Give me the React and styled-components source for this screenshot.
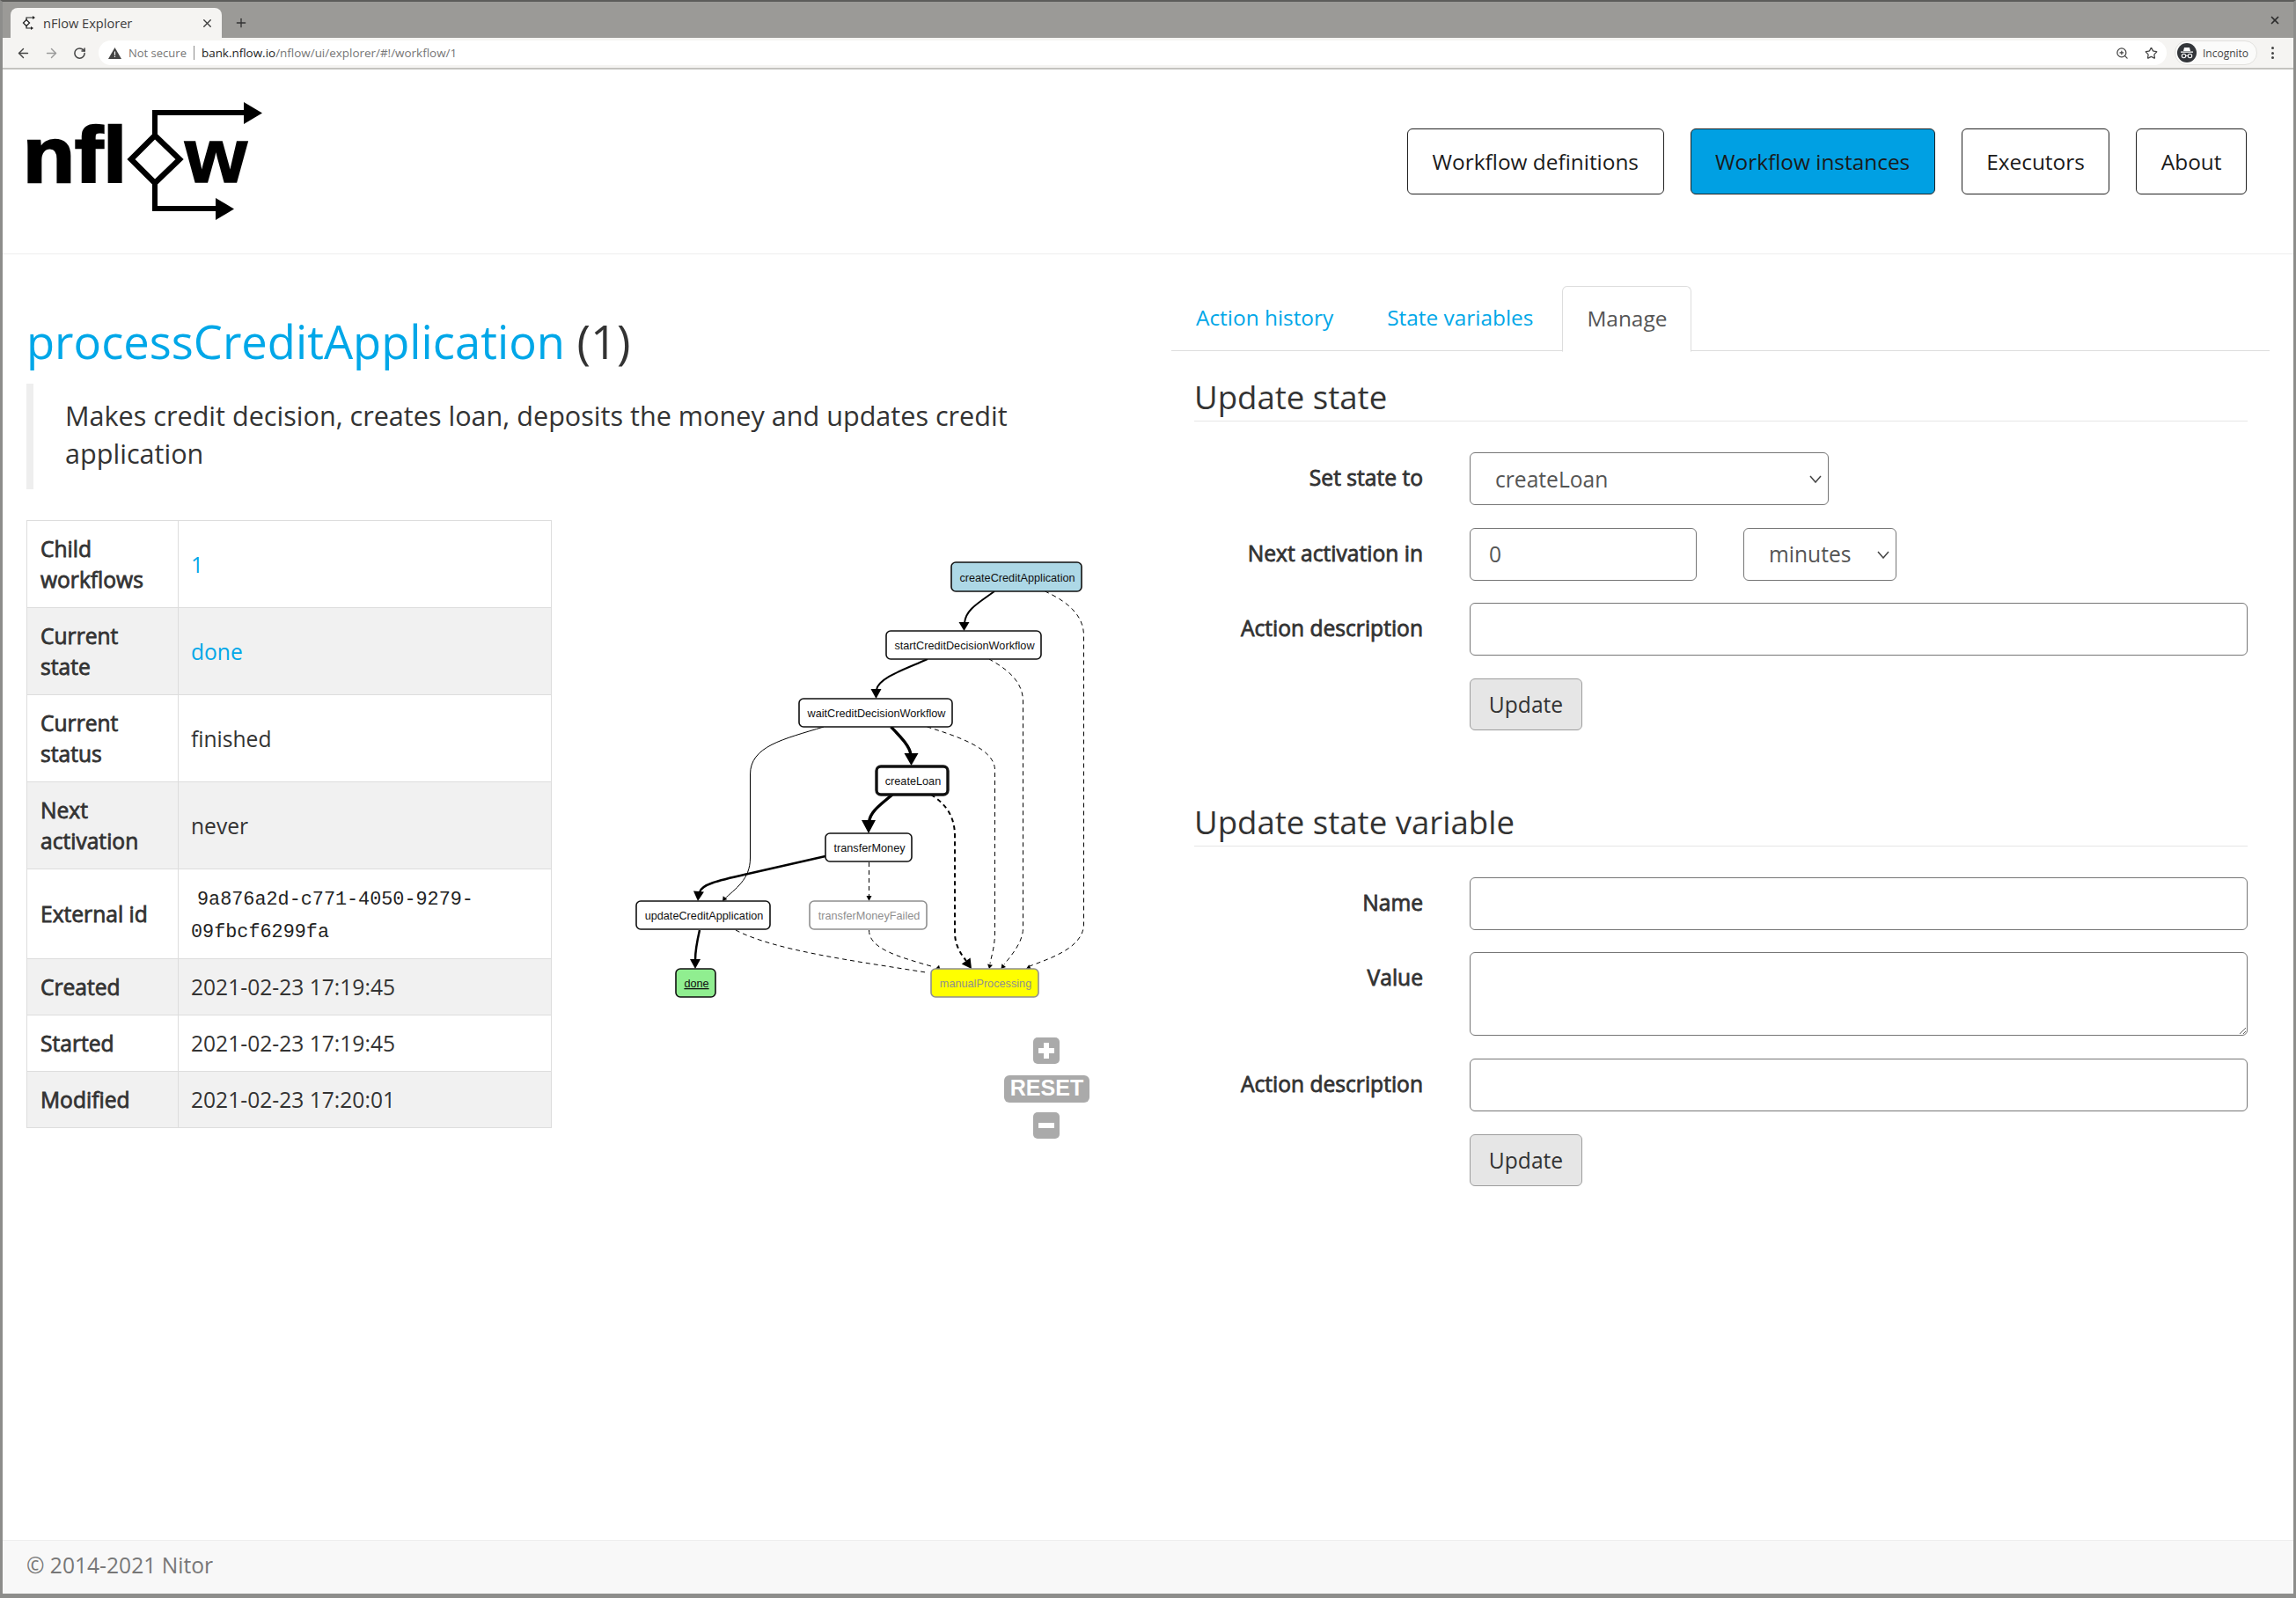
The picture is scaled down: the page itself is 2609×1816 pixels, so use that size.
import React from 'react'
import styled, { createGlobalStyle } from 'styled-components'
import { ArrowLeft, ArrowRight, RotateCw, ZoomIn, Star, X, Plus } from 'lucide-react'

const GlobalStyle = createGlobalStyle`
  html, body {
    margin: 0;
    padding: 0;
    background: #fff;
  }
  body {
    font-family: 'Open Sans', 'Noto Sans', sans-serif;
    color: #333;
  }
  * {
    box-sizing: border-box;
  }
`

const Frame = styled.div`
  width: 2609px;
  height: 1816px;
  overflow: hidden;
  display: flex;
  flex-direction: column;
  border-top: 2px solid #5c5c5a;
  border-left: 3px solid #8d8d8b;
  border-right: 3px solid #8d8d8b;
  border-bottom: 5px solid #8d8d8b;
`

const TabStrip = styled.div`
  height: 41px;
  flex: none;
  background: #9b9a97;
  display: flex;
  align-items: flex-end;
  padding-left: 9px;
  color: #333;
`

const BrowserTab = styled.div`
  width: 240px;
  height: 34px;
  background: #f5f4f2;
  border-radius: 8px 8px 0 0;
  display: flex;
  align-items: center;
  padding: 0 9px 0 12px;
  font-size: 14.6px;
  color: #3c3c3c;
`

const TabTitle = styled.span`
  flex: 1;
  margin-left: 9px;
`

const NewTab = styled.div`
  width: 16px;
  height: 34px;
  margin-left: 14px;
  display: flex;
  align-items: center;
  color: #333;
`

const WindowClose = styled.div`
  margin-left: auto;
  margin-right: 14px;
  align-self: center;
  display: flex;
  color: #2c2c2c;
`

const Toolbar = styled.div`
  height: 36px;
  flex: none;
  background: #f5f4f2;
  border-bottom: 2px solid #c4c3bf;
  display: flex;
  align-items: center;
  padding-left: 15px;
  color: #555;
`

const NavIcon = styled.span`
  width: ${(p) => p.$width}px;
  display: flex;
  color: ${(p) => (p.$muted ? '#9a9a9a' : '#444')};
`

const UrlBar = styled.div`
  width: 2350px;
  height: 28px;
  margin-left: 14px;
  background: #fff;
  border-radius: 14px;
  display: flex;
  align-items: center;
  padding: 0 10px 0 11px;
  font-size: 13.45px;
  color: #767676;
`

const NotSecure = styled.span`
  margin-left: 8px;
  font-size: 13px;
`

const UrlHost = styled.span`
  color: #222;
`

const Divider = styled.span`
  width: 1px;
  height: 16px;
  background: #8a8a8a;
  margin: 0 8px;
`

const UrlEnd = styled.div`
  margin-left: auto;
  display: flex;
  align-items: center;
  gap: 18px;
  color: #444;
`

const IncognitoPill = styled.div`
  width: 94px;
  height: 28px;
  margin-left: 9px;
  border: 1px solid #e2e1de;
  border-radius: 14px;
  background: #fbfbfa;
  display: flex;
  align-items: center;
  gap: 7px;
  padding-left: 2px;
  font-size: 12px;
  color: #444;
`

const Kebab = styled.div`
  margin-left: 16px;
  display: flex;
  flex-direction: column;
  gap: 2.5px;

  span {
    width: 3px;
    height: 3px;
    border-radius: 50%;
    background: #444;
  }
`

const Header = styled.header`
  height: 210px;
  flex: none;
  border-bottom: 1px solid #eee;
  display: flex;
  align-items: flex-start;
  justify-content: space-between;
  padding: 37px 53px 0 23px;
`

const Nav = styled.nav`
  display: flex;
  gap: 30px;
  margin-top: 30px;
`

const NavButton = styled.a`
  height: 75px;
  padding: 0 27.5px;
  display: flex;
  align-items: center;
  font-size: 24.4px;
  color: #1a1a1a;
  background: ${(p) => (p.$active ? '#00a0e3' : '#fff')};
  border: 1.5px solid #222;
  border-radius: 6px;
`

const Main = styled.main`
  flex: 1;
  display: flex;
`

const LeftColumn = styled.section`
  width: 1328px;
  flex: none;
  padding: 64px 0 0 27px;
`

const Title = styled.h1`
  margin: 0;
  font-size: 52.5px;
  line-height: 70px;
  font-weight: 400;
  color: #333;

  a {
    color: #00a7e8;
  }
`

const Quote = styled.blockquote`
  width: 1270px;
  height: 120px;
  margin: 13px 0 0;
  padding: 0 50px 4px 36px;
  border-left: 8px solid #eee;
  font-size: 30.6px;
  line-height: 43px;
  display: flex;
  align-items: center;
`

const Details = styled.div`
  display: flex;
  align-items: flex-start;
  margin-top: 35px;
`

const InfoTable = styled.table`
  width: 597px;
  flex: none;
  border-collapse: collapse;
  font-size: 24.6px;
  line-height: 35px;
  color: #333;

  tr:nth-child(even) {
    background: #f1f1f1;
  }

  th,
  td {
    border: 1.5px solid #ddd;
    padding: 14px 15px;
    text-align: left;
    vertical-align: middle;
  }

  td {
    padding-left: 14px;
  }

  th {
    width: 172px;
    font-weight: 400;
    -webkit-text-stroke: 0.8px #333;
  }

  a {
    color: #00a7e8;
  }
`

const Mono = styled.code`
  display: block;
  margin-bottom: -3px;
  padding-top: 2px;
  font-family: 'Liberation Mono', monospace;
  font-size: 21.8px;
  line-height: 37px;
  color: #222;
  text-indent: 7px;
`

const GraphSvg = styled.svg`
  flex: none;
  margin-left: 73px;
  font-family: 'Liberation Sans', Arial, sans-serif;
`

const RightColumn = styled.section`
  width: 1248px;
  flex: none;
  padding-top: 36px;
`

const Tabs = styled.div`
  height: 74px;
  display: flex;
  gap: 5px;
  align-items: stretch;
  border-bottom: 1.5px solid #ddd;
`

const TabLink = styled.a`
  padding: 0 27px 2px;
  margin-bottom: ${(p) => (p.$active ? '-1.5px' : '0')};
  display: flex;
  align-items: center;
  font-size: 24.4px;
  color: ${(p) => (p.$active ? '#555' : '#00a7e8')};
  background: ${(p) => (p.$active ? '#fff' : 'transparent')};
  border: 1.5px solid ${(p) => (p.$active ? '#ddd' : 'transparent')};
  border-bottom-color: ${(p) => (p.$active ? '#fff' : 'transparent')};
  border-radius: 6px 6px 0 0;
`

const Panel = styled.div`
  padding: 0 25px 0 26px;
`

const Section = styled.div`
  margin-top: ${(p) => p.$top}px;
`

const SectionTitle = styled.h3`
  margin: 0 0 35px;
  height: 60px;
  font-size: 36.6px;
  line-height: 64px;
  font-weight: 400;
  color: #333;
  border-bottom: 1.5px solid #e6e6e6;
`

const FormRow = styled.div`
  display: grid;
  grid-template-columns: 260px 1fr;
  column-gap: 53px;
  margin-bottom: 25.6px;
  align-items: start;
`

const FormLabel = styled.label`
  text-align: right;
  padding-top: 11px;
  font-size: 24.6px;
  line-height: 36px;
  font-weight: 400;
  -webkit-text-stroke: 0.8px #333;
  color: #333;
`

const Controls = styled.div`
  display: flex;
  gap: 53px;
`

const Input = styled.input`
  width: ${(p) => p.$width || '100%'};
  height: 60px;
  padding: 0 21px;
  font: 400 24.6px 'Open Sans', sans-serif;
  color: #555;
  background: #fff;
  border: 1.5px solid #767676;
  border-radius: 6px;
  outline: none;
`

const TextArea = styled.textarea`
  display: block;
  width: 100%;
  height: 95px;
  padding: 10px 21px;
  font: 400 24.6px 'Open Sans', sans-serif;
  color: #555;
  background: #fff;
  border: 1.5px solid #767676;
  border-radius: 6px;
  outline: none;
`

const SelectWrap = styled.div`
  position: relative;
  width: ${(p) => p.$width}px;
  height: 60px;

  svg {
    position: absolute;
    right: 8px;
    top: 26px;
    pointer-events: none;
  }
`

const Select = styled.select`
  appearance: none;
  width: 100%;
  height: 60px;
  padding: 0 0 0 28px;
  font: 400 24.6px 'Open Sans', sans-serif;
  color: #555;
  background: #fff;
  border: 1.5px solid #767676;
  border-radius: 6px;
  outline: none;
`

const UpdateButton = styled.button`
  grid-column: 2;
  justify-self: start;
  width: 128px;
  height: 59px;
  font: 400 24.6px 'Open Sans', sans-serif;
  color: #333;
  background: #e6e6e6;
  border: 1.5px solid #9d9d9d;
  border-radius: 6px;
`

const Footer = styled.footer`
  height: 61px;
  flex: none;
  background: #f8f8f8;
  border-top: 1.5px solid #eee;
  display: flex;
  align-items: center;
  padding: 0 0 5px 27px;
  font-size: 24.6px;
  color: #777;
`

const nodes = [
  { label: 'createCreditApplication', x: 1081, y: 639, w: 148, h: 33, fill: '#add8e6' },
  { label: 'startCreditDecisionWorkflow', x: 1007, y: 717, w: 176, h: 32 },
  { label: 'waitCreditDecisionWorkflow', x: 908, y: 794, w: 174, h: 32 },
  { label: 'createLoan', x: 996, y: 871, w: 81, h: 32, bold: true },
  { label: 'transferMoney', x: 938, y: 947, w: 98, h: 32 },
  { label: 'updateCreditApplication', x: 723, y: 1024, w: 152, h: 32 },
  { label: 'transferMoneyFailed', x: 920, y: 1024, w: 133, h: 32, gray: true },
  { label: 'done', x: 768, y: 1101, w: 45, h: 32, fill: '#90ee90', underline: true },
  { label: 'manualProcessing', x: 1058, y: 1101, w: 122, h: 32, fill: '#ffff00', gray: true },
]

const edges = [
  { d: 'M1130 672C1112 685 1097 693 1096 708', w: 2, tip: [1095.5, 717, 0, 10, 6] },
  { d: 'M1054 749C1030 760 998 770 996 784', w: 2, tip: [995.5, 794, 0, 11, 6] },
  { d: 'M1012.5 826C1024 838 1034 848 1035 858', w: 3.4, tip: [1035.5, 870, 0, 14, 8] },
  { d: 'M1014 903C1000 915 989 922 987.5 934', w: 3.4, tip: [987, 947, 0, 15, 8] },
  { d: 'M938 973L850 993C815 1001 797 1005 795 1014', w: 2.5, tip: [793, 1024, 5, 11, 6] },
  { d: 'M936 826C890 840 852.5 848 852.5 880L852.5 975C852.5 1000 835 1010 823 1022', w: 1, tip: [821, 1024, 38, 5, 3] },
  { d: 'M987.5 980L987.5 1018', w: 1, dash: '5 4', tip: [987.5, 1024, 0, 6, 3] },
  { d: 'M795 1057C792 1070 790 1080 790 1091', w: 2.5, tip: [790, 1101, 0, 11, 6] },
  { d: 'M1187.5 672C1205 680 1231.5 695 1231.5 722L1231.5 1050C1231.5 1078 1190 1090 1170 1098', w: 1, dash: '5 4', tip: [1166, 1101, 65, 5, 3] },
  { d: 'M1124 749C1140 758 1162.5 772 1162.5 797L1162.5 1055C1162.5 1070 1150 1085 1141 1096', w: 1, dash: '5 4', tip: [1137.5, 1101, 40, 5, 3] },
  { d: 'M1053.5 826C1085 836 1130.5 850 1130.5 875L1130.5 1060C1130.5 1075 1127 1085 1125 1095', w: 1, dash: '5 4', tip: [1124, 1101, 12, 5, 3] },
  { d: 'M1058 903C1072 912 1085 925 1085 950L1085 1060C1085 1072 1090 1082 1098 1092', w: 2, dash: '5 4', tip: [1104, 1101, 325, 11, 6] },
  { d: 'M987.5 1057C987.5 1078 1020 1087 1058 1098', w: 1, dash: '5 4', tip: [1063, 1101, 75, 5, 3] },
  { d: 'M836 1057C880 1080 970 1092 1052 1105', w: 1, dash: '5 4', tip: [1058, 1107, 80, 5, 3] },
]

const Logo = () => (
  <svg width="276" height="136" viewBox="26 117 276 136" role="img" aria-label="nflow">
    <text x="26" y="208" textLength="118" lengthAdjust="spacingAndGlyphs" fontFamily="Liberation Sans, Arial, sans-serif" fontWeight="700" fontSize="89" stroke="#000" strokeWidth="2.5">nfl</text>
    <text x="210" y="208" textLength="71" lengthAdjust="spacingAndGlyphs" fontFamily="Liberation Sans, Arial, sans-serif" fontWeight="700" fontSize="88" stroke="#000" strokeWidth="1.5">w</text>
    <path d="M176 155V129H280M176 210V238H248" fill="none" stroke="#000" strokeWidth="6" />
    <path d="M176 155L204 182 176 209 149 182Z" fill="#fff" stroke="#000" strokeWidth="6.5" />
    <path d="M277 117L298 129.5 277 142ZM245 226L266 238.5 245 251Z" fill="#000" />
  </svg>
)

const Favicon = () => (
  <svg width="16" height="16" viewBox="0 0 16 16">
    <path d="M6 5V2H14M6 11V14H12" fill="none" stroke="#222" strokeWidth="1.2" />
    <path d="M6 4.5L9.5 8 6 11.5 2.5 8Z" fill="#fff" stroke="#222" strokeWidth="1.3" />
    <path d="M13 0L16 2 13 4ZM11 12L14 14 11 16Z" fill="#222" />
  </svg>
)

const WarningIcon = () => (
  <svg width="15" height="13" viewBox="0 0 15 13">
    <path d="M7.5 0L15 13H0Z" fill="#444" />
    <path d="M6.9 4.5H8.1V8.8H6.9ZM6.9 9.8H8.1V11H6.9Z" fill="#fff" />
  </svg>
)

const IncognitoIcon = () => (
  <svg width="22" height="22" viewBox="0 0 22 22">
    <circle cx="11" cy="11" r="11" fill="#33363a" />
    <path d="M7 9L8 5H14L15 9ZM4 9.6H18V10.8H4Z" fill="#fff" />
    <circle cx="7.5" cy="14.5" r="2.2" fill="none" stroke="#fff" strokeWidth="1.1" />
    <circle cx="14.5" cy="14.5" r="2.2" fill="none" stroke="#fff" strokeWidth="1.1" />
    <path d="M9.7 14.3H12.3" stroke="#fff" strokeWidth="1" />
  </svg>
)

const Chevron = () => (
  <svg width="14" height="9" viewBox="0 0 14 9">
    <path d="M1 1L7 8L13 1" fill="none" stroke="#444" strokeWidth="1.5" />
  </svg>
)

const Arrow = ({ tip, color }) => {
  const [x, y, angle, len, half] = tip
  return (
    <path
      d={`M${x} ${y}L${x - half} ${y - len}L${x + half} ${y - len}Z`}
      transform={`rotate(${angle} ${x} ${y})`}
      fill={color}
    />
  )
}

const Graph = () => (
  <GraphSvg width="560" height="720" viewBox="700 591 560 720">
    {edges.map((edge) => (
      <g key={edge.d}>
        <path
          d={edge.d}
          fill="none"
          stroke="#000"
          strokeWidth={edge.w}
          strokeDasharray={edge.dash}
        />
        <Arrow tip={edge.tip} color="#000" />
      </g>
    ))}
    {nodes.map((node) => (
      <g key={node.label}>
        <rect
          x={node.x}
          y={node.y}
          width={node.w}
          height={node.h}
          rx="5"
          fill={node.fill || '#fff'}
          stroke={node.gray ? '#8f8f8f' : '#111'}
          strokeWidth={node.bold ? 3.4 : 1.6}
        />
        <text
          x={node.x + node.w / 2 + 1}
          y={node.y + node.h / 2 + 5}
          textAnchor="middle"
          fontSize="12.7"
          fill={node.gray ? '#8f8f8f' : '#111'}
          textDecoration={node.underline ? 'underline' : undefined}
        >
          {node.label}
        </text>
      </g>
    ))}
    <rect x="1174" y="1179" width="30" height="30" rx="5" fill="#aaa" />
    <path d="M1189 1185V1203M1180 1194H1198" stroke="#fff" strokeWidth="6" />
    <rect x="1141" y="1222" width="97" height="31" rx="6" fill="#aaa" />
    <text x="1189.5" y="1245" textAnchor="middle" fontSize="25" fontWeight="700" fill="#fff">RESET</text>
    <rect x="1174" y="1264" width="30" height="30" rx="5" fill="#aaa" />
    <path d="M1180 1279H1198" stroke="#fff" strokeWidth="6" />
  </GraphSvg>
)

const BrowserChrome = () => (
  <>
    <TabStrip>
      <BrowserTab>
        <Favicon />
        <TabTitle>nFlow Explorer</TabTitle>
        <X size={15} strokeWidth={2.2} />
      </BrowserTab>
      <NewTab>
        <Plus size={16} strokeWidth={2} />
      </NewTab>
      <WindowClose>
        <X size={14} strokeWidth={3} />
      </WindowClose>
    </TabStrip>
    <Toolbar>
      <NavIcon $width={32}><ArrowLeft size={17} strokeWidth={2} /></NavIcon>
      <NavIcon $width={33} $muted><ArrowRight size={17} strokeWidth={2} /></NavIcon>
      <NavIcon $width={15}><RotateCw size={15} strokeWidth={2.4} /></NavIcon>
      <UrlBar>
        <WarningIcon />
        <NotSecure>Not secure</NotSecure>
        <Divider />
        <UrlHost>bank.nflow.io</UrlHost>/nflow/ui/explorer/#!/workflow/1
        <UrlEnd>
          <ZoomIn size={15} strokeWidth={2} />
          <Star size={15} strokeWidth={2} />
        </UrlEnd>
      </UrlBar>
      <IncognitoPill>
        <IncognitoIcon />
        Incognito
      </IncognitoPill>
      <Kebab>
        <span />
        <span />
        <span />
      </Kebab>
    </Toolbar>
  </>
)

const App = () => {
  return (
    <Frame>
      <GlobalStyle />
      <BrowserChrome />

      <Header>
        <Logo />
        <Nav>
          <NavButton>Workflow definitions</NavButton>
          <NavButton $active>Workflow instances</NavButton>
          <NavButton>Executors</NavButton>
          <NavButton>About</NavButton>
        </Nav>
      </Header>

      <Main>
        <LeftColumn>
          <Title>
            <a>processCreditApplication</a> (1)
          </Title>
          <Quote>
            Makes credit decision, creates loan, deposits the money and updates credit application
          </Quote>

          <Details>
            <InfoTable>
              <tbody>
                <tr><th>Child workflows</th><td><a>1</a></td></tr>
                <tr><th>Current state</th><td><a>done</a></td></tr>
                <tr><th>Current status</th><td>finished</td></tr>
                <tr><th>Next activation</th><td>never</td></tr>
                <tr><th>External id</th><td><Mono>9a876a2d-c771-4050-9279-09fbcf6299fa</Mono></td></tr>
                <tr><th>Created</th><td>2021-02-23 17:19:45</td></tr>
                <tr><th>Started</th><td>2021-02-23 17:19:45</td></tr>
                <tr><th>Modified</th><td>2021-02-23 17:20:01</td></tr>
              </tbody>
            </InfoTable>
            <Graph />
          </Details>
        </LeftColumn>

        <RightColumn>
          <Tabs>
            <TabLink>Action history</TabLink>
            <TabLink>State variables</TabLink>
            <TabLink $active>Manage</TabLink>
          </Tabs>

          <Panel>
            <Section $top={20}>
              <SectionTitle>Update state</SectionTitle>
              <FormRow>
                <FormLabel>Set state to</FormLabel>
                <SelectWrap $width={408}>
                  <Select defaultValue="createLoan">
                    <option>createLoan</option>
                    <option>transferMoney</option>
                  </Select>
                  <Chevron />
                </SelectWrap>
              </FormRow>
              <FormRow>
                <FormLabel>Next activation in</FormLabel>
                <Controls>
                  <Input $width="258px" defaultValue="0" />
                  <SelectWrap $width={174}>
                    <Select defaultValue="minutes">
                      <option>minutes</option>
                      <option>hours</option>
                    </Select>
                    <Chevron />
                  </SelectWrap>
                </Controls>
              </FormRow>
              <FormRow>
                <FormLabel>Action description</FormLabel>
                <Input />
              </FormRow>
              <FormRow>
                <UpdateButton>Update</UpdateButton>
              </FormRow>
            </Section>

            <Section $top={72}>
              <SectionTitle>Update state variable</SectionTitle>
              <FormRow>
                <FormLabel>Name</FormLabel>
                <Input />
              </FormRow>
              <FormRow>
                <FormLabel>Value</FormLabel>
                <TextArea />
              </FormRow>
              <FormRow>
                <FormLabel>Action description</FormLabel>
                <Input />
              </FormRow>
              <FormRow>
                <UpdateButton>Update</UpdateButton>
              </FormRow>
            </Section>
          </Panel>
        </RightColumn>
      </Main>

      <Footer>© 2014-2021 Nitor</Footer>
    </Frame>
  )
}

export default App
